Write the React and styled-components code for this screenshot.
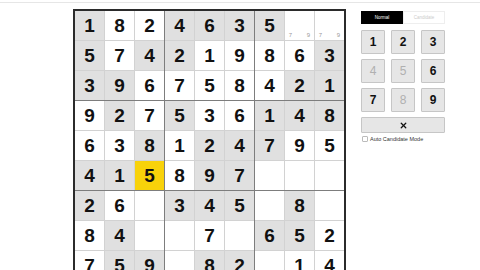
import styled, { createGlobalStyle } from "styled-components"
import { X } from "lucide-react"

const VALUES = [
  "1824635..",
  "574219863",
  "396758421",
  "927536148",
  "638124795",
  "415897...",
  "26.345.8.",
  "84..7.652",
  "759.82.14",
]

// g = gray, w = white, y = selected
const SHADE = [
  "gwwggggww",
  "gwggwwwwg",
  "ggwwwwwgg",
  "wgwgwwggg",
  "wwgwgggww",
  "ggywggwww",
  "gwwgggwgw",
  "wgwwwwggw",
  "wggwggwww",
]

const CANDIDATES = {
  "0-7": [7, 9],
  "0-8": [7, 9],
}

export default function App() {
  const boxes = [0, 1, 2, 3, 4, 5, 6, 7, 8]
  return (
    <>
      <GlobalStyle />
      <TopBar />
      <Main>
        <Board>
          {boxes.map((b) => (
            <Box key={b}>
              {[0, 1, 2, 3, 4, 5, 6, 7, 8].map((i) => {
                const r = Math.floor(b / 3) * 3 + Math.floor(i / 3)
                const c = (b % 3) * 3 + (i % 3)
                const v = VALUES[r][c]
                const cands = CANDIDATES[`${r}-${c}`]
                return (
                  <Cell key={i} shade={SHADE[r][c]}>
                    {v !== "." ? v : cands ? (
                      <Notes>
                        {[1, 2, 3, 4, 5, 6, 7, 8, 9].map((n) => (
                          <span key={n}>{cands.includes(n) ? n : ""}</span>
                        ))}
                      </Notes>
                    ) : ""}
                  </Cell>
                )
              })}
            </Box>
          ))}
        </Board>

        <Panel>
          <Toggle>
            <ModeButton active>Normal</ModeButton>
            <ModeButton>Candidate</ModeButton>
          </Toggle>
          <Pad>
            {[1, 2, 3, 4, 5, 6, 7, 8, 9].map((n) => (
              <NumButton key={n} disabled={[4, 5, 8].includes(n)}>{n}</NumButton>
            ))}
          </Pad>
          <ClearButton>
            <X size={9} strokeWidth={3.5} />
          </ClearButton>
          <AutoRow>
            <Check />
            <span>Auto Candidate Mode</span>
          </AutoRow>
        </Panel>
      </Main>
    </>
  )
}

const GlobalStyle = createGlobalStyle`
  html, body {
    margin: 0;
    overflow: hidden;
    background: #fff;
    font-family: "Liberation Sans", Arial, sans-serif;
  }
`
const TopBar = styled.div`
  height: 2px;
  border-bottom: 1px solid #e6e6e6;
`
const Main = styled.main`
  display: flex;
  align-items: flex-start;
  gap: 15px;
  padding: 6px 0 0 73px;
`
const Board = styled.div`
  display: grid;
  grid-template-columns: repeat(3, auto);
  gap: 1px;
  background: #7d7d7d;
  border: 2px solid #2b2b2b;
  flex-shrink: 0;
`
const Box = styled.div`
  display: grid;
  grid-template-columns: repeat(3, 29px);
  grid-auto-rows: 29px;
  gap: 1px;
  background: #d2d2d2;
`
const Cell = styled.div`
  display: flex;
  align-items: center;
  justify-content: center;
  font-size: 19px;
  font-weight: 700;
  color: #111;
  background: ${(p) => (p.shade === "g" ? "#e0e0e0" : p.shade === "y" ? "#f8d20a" : "#fff")};
`
const Notes = styled.div`
  width: 100%;
  height: 100%;
  display: grid;
  grid-template-columns: repeat(3, 1fr);
  grid-template-rows: repeat(3, 1fr);
  padding: 1px 1px 0;
  box-sizing: border-box;
  span {
    font-size: 6px;
    font-weight: 400;
    color: #9a9a9a;
    display: flex;
    align-items: center;
    justify-content: center;
  }
`
const Panel = styled.aside`
  width: 84px;
  padding-top: 2px;
  display: flex;
  flex-direction: column;
  gap: 5px;
`
const Toggle = styled.div`
  display: flex;
  height: 13px;
  margin-bottom: 1px;
`
const ModeButton = styled.button`
  flex: 1;
  padding: 0;
  font-family: inherit;
  font-size: 4.5px;
  border: 1px solid ${(p) => (p.active ? "#000" : "#eee")};
  background: ${(p) => (p.active ? "#000" : "#fff")};
  color: ${(p) => (p.active ? "#fff" : "#ccc")};
`
const Pad = styled.div`
  display: grid;
  grid-template-columns: repeat(3, 1fr);
  grid-auto-rows: 24px;
  column-gap: 6px;
  row-gap: 5px;
`
const NumButton = styled.button`
  padding: 0;
  font-family: inherit;
  font-size: 12px;
  font-weight: ${(p) => (p.disabled ? 400 : 700)};
  color: ${(p) => (p.disabled ? "#b0b0b0" : "#111")};
  background: #e6e6e6;
  border: 1px solid #c6c6c6;
  border-radius: 1px;
`
const ClearButton = styled.button`
  height: 16px;
  padding: 0;
  display: flex;
  align-items: center;
  justify-content: center;
  color: #111;
  background: #e6e6e6;
  border: 1px solid #c6c6c6;
  border-radius: 1px;
`
const AutoRow = styled.label`
  display: flex;
  align-items: center;
  gap: 2px;
  margin-top: -2px;
  font-size: 5.5px;
  color: #333;
  padding-left: 1px;
`
const Check = styled.span`
  width: 4px;
  height: 4px;
  border: 1px solid #bbb;
  border-radius: 1px;
  background: #fff;
`
